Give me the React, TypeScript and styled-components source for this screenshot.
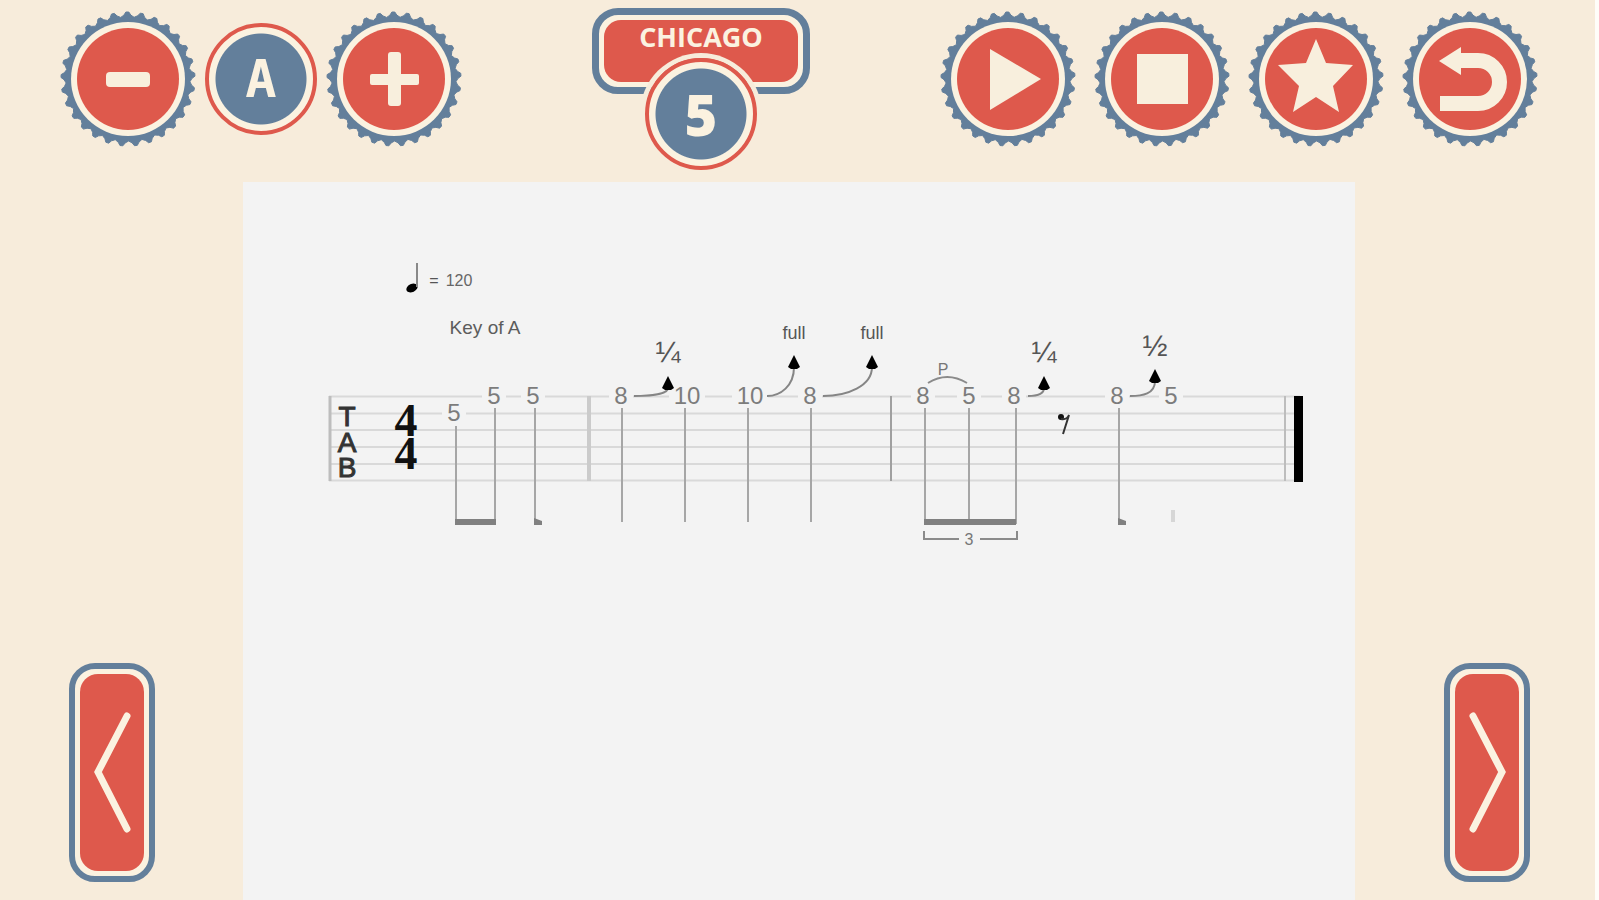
import React from "react";
import styled, { createGlobalStyle } from "styled-components";

const color = {
  page: "#f7ecdb",
  cream: "#fbf2e0",
  icon: "#f8efdd",
  red: "#de594c",
  blue: "#637f9b",
  paper: "#f3f3f3",
  staff: "#d9d9d9",
  stem: "#a6a6a6",
  beam: "#808080",
  fret: "#7c7c7c",
};

const GlobalStyle = createGlobalStyle`
  *, *::before, *::after { box-sizing: border-box; }
  body { margin: 0; background: #fffdf9; }
`;

const Page = styled.div`
  display: flex;
  flex-direction: column;
  min-height: 100vh;
  margin-right: 4px;
  background: ${color.page};
  font-family: "Open Sans", "Noto Sans", sans-serif;
`;

const Header = styled.header`
  display: flex;
  justify-content: space-between;
  align-items: flex-start;
  padding: 8px 57px 12px 60px;
`;

const Group = styled.div<{ $gap: number }>`
  display: flex;
  align-items: center;
  gap: ${(p) => p.$gap}px;
  margin-top: 3px;
`;

const RoundButton = styled.button`
  display: block;
  width: 136px;
  height: 136px;
  padding: 0;
  border: 0;
  border-radius: 50%;
  background: none;
  cursor: pointer;

  svg { display: block; }
`;

const Dial = styled.output<{ $narrow?: boolean }>`
  display: flex;
  align-items: center;
  justify-content: center;
  width: 112px;
  height: 112px;
  border: 4px solid ${color.red};
  border-radius: 50%;
  background: radial-gradient(circle, ${color.blue} 45px, ${color.cream} 46px);
  color: ${color.cream};
  font-family: ${(p) =>
    p.$narrow ? '"DejaVu Sans Mono", monospace' : '"Open Sans", sans-serif'};
  font-size: ${(p) => (p.$narrow ? 52 : 56)}px;
  font-weight: ${(p) => (p.$narrow ? 700 : 800)};
  line-height: 60px;
`;

const Badge = styled.div`
  position: relative;
  width: 218px;
  height: 162px;
`;

const Plate = styled.div`
  height: 86px;
  padding: 5px;
  border: 7px solid ${color.blue};
  border-radius: 26px;
  background: ${color.cream};
`;

const Title = styled.h1`
  height: 100%;
  margin: 0;
  border-radius: 17px;
  background: ${color.red};
  color: ${color.cream};
  font-size: 27px;
  font-weight: 700;
  line-height: 34px;
  text-align: center;
`;

const BadgeDial = styled.div`
  position: absolute;
  top: 50px;
  left: 53px;
  border-radius: 50%;
  box-shadow: 0 0 0 5px ${color.page};
`;

const Main = styled.main`
  display: flex;
  flex: 1;
`;

const Side = styled.nav<{ $width: number; $inset: number }>`
  display: flex;
  flex: none;
  align-items: flex-end;
  width: ${(p) => p.$width}px;
  padding: 0 0 18px ${(p) => p.$inset}px;
`;

const PageButton = styled.button`
  width: 86px;
  height: 219px;
  padding: 5px;
  border: 6px solid ${color.blue};
  border-radius: 26px;
  background: ${color.cream};
  cursor: pointer;
`;

const PageButtonFace = styled.span`
  display: flex;
  align-items: center;
  justify-content: center;
  height: 100%;
  border-radius: 18px;
  background: ${color.red};

  svg { display: block; }
`;

const Paper = styled.section`
  flex: 1;
  min-width: 0;
  background: ${color.paper};
`;

const Score = styled.svg`
  display: block;
  width: 100%;
  height: auto;
  font-family: "Liberation Sans", sans-serif;
  text-anchor: middle;
`;

const TEETH = 29;

const TOOTH = [
  [-0.5, 62],
  [-0.25, 64],
  [-0.1, 67],
  [0.1, 67],
  [0.25, 64],
];

function gearPath() {
  const points: string[] = [];
  for (let i = 0; i < TEETH; i++) {
    for (const [offset, radius] of TOOTH) {
      const a = ((i + offset) / TEETH) * Math.PI * 2 - Math.PI / 2 - 0.01;
      points.push(`${(Math.cos(a) * radius).toFixed(2)} ${(Math.sin(a) * radius).toFixed(2)}`);
    }
  }
  return `M${points.join("L")}Z`;
}

const GEAR = gearPath();

function GearButton({ label, children }: { label: string; children: React.ReactNode }) {
  return (
    <RoundButton type="button" aria-label={label}>
      <svg width="136" height="136" viewBox="-68 -68 136 136" aria-hidden="true">
        <path d={GEAR} fill={color.blue} stroke={color.blue} strokeLinejoin="round" />
        <circle r="57" fill={color.cream} />
        <circle r="51" fill={color.red} />
        <g fill={color.icon}>{children}</g>
      </svg>
    </RoundButton>
  );
}

function Chevron({ d }: { d: string }) {
  return (
    <svg width="63" height="197" viewBox="0 0 63 197" aria-hidden="true">
      <path d={d} fill="none" stroke={color.cream} strokeWidth="7" strokeLinecap="round" strokeLinejoin="miter" />
    </svg>
  );
}

const STRINGS = [396.5, 413.5, 430, 447, 464, 480.5];

const FRETS = [
  { x: 454, y: 413, n: "5" },
  { x: 494, y: 396, n: "5" },
  { x: 533, y: 396, n: "5" },
  { x: 621, y: 396, n: "8" },
  { x: 687, y: 396, n: "10" },
  { x: 750, y: 396, n: "10" },
  { x: 810, y: 396, n: "8" },
  { x: 923, y: 396, n: "8" },
  { x: 969, y: 396, n: "5" },
  { x: 1014, y: 396, n: "8" },
  { x: 1117, y: 396, n: "8" },
  { x: 1171, y: 396, n: "5" },
];

const STEMS = [
  [456, 426, 524],
  [495, 408, 524],
  [535, 408, 524],
  [622, 408, 522],
  [685, 408, 522],
  [748, 408, 522],
  [811, 408, 522],
  [925, 408, 524],
  [969, 408, 524],
  [1016, 408, 524],
  [1119, 408, 524],
];

const BENDS = [
  { from: 634, x: 668, tip: 376, amount: "¼", size: 30, labelY: 362 },
  { from: 767, x: 794, tip: 355, amount: "full", size: 18, labelY: 339 },
  { from: 823, x: 872, tip: 355, amount: "full", size: 18, labelY: 339 },
  { from: 1028, x: 1044, tip: 376, amount: "¼", size: 30, labelY: 362 },
  { from: 1130, x: 1155, tip: 369, amount: "½", size: 30, labelY: 356 },
];

function Tablature() {
  return (
    <Score viewBox="243 182 1112 400" role="img" aria-label="Guitar tablature, key of A">
      <ellipse cx="412" cy="288" rx="6" ry="4" transform="rotate(-25 412 288)" fill="#000" />
      <path d="M417 263V287" stroke="#888" strokeWidth="2" />
      <text x="434" y="286" fontSize="16" fill="#555">=</text>
      <text x="459" y="286" fontSize="16" fill="#666">120</text>
      <text x="485" y="334" fontSize="19" fill="#5c5c5c">Key of A</text>

      <g stroke={color.staff} strokeWidth="2">
        {STRINGS.map((y) => (
          <path key={y} d={`M329 ${y}H1300`} />
        ))}
      </g>
      <path d="M330 396V481" stroke="#bdbdbd" strokeWidth="3" />
      <path d="M589 396V481" stroke="#cbcbcb" strokeWidth="4" />
      <path d="M891 396V481" stroke="#a0a0a0" strokeWidth="2" />
      <path d="M1285 396V481" stroke="#bdbdbd" strokeWidth="2" />
      <path d="M1294 396H1303V482H1294Z" fill="#000" />

      <g fontSize="28" fill="#333" stroke="#333" strokeWidth="1">
        <text x="347" y="426">T</text>
        <text x="347" y="452">A</text>
        <text x="347" y="477">B</text>
      </g>
      <g fontFamily="'Liberation Serif', serif" fontSize="46" fontWeight="700" fill="#111">
        <text x="406" y="436">4</text>
        <text x="406" y="469">4</text>
      </g>

      {STEMS.map(([x, top, bottom]) => (
        <path key={x} d={`M${x} ${top}V${bottom}`} stroke={color.stem} strokeWidth="2" />
      ))}
      <path d="M1173 510V522" stroke="#d6d6d6" strokeWidth="4" />
      <g fill={color.beam}>
        <path d="M455 519H496V525H455Z" />
        <path d="M534 518L542 521V525H534Z" />
        <path d="M924 519H1016V525H924Z" />
        <path d="M1118 518L1126 521V525H1118Z" />
      </g>

      {FRETS.map(({ x, y, n }) => {
        const half = n.length > 1 ? 18 : 12;
        return (
          <g key={x}>
            <rect x={x - half} y={y - 4} width={half * 2} height="8" fill={color.paper} />
            <text x={x} y={y + 8} fontSize="24" fill={color.fret}>{n}</text>
          </g>
        );
      })}

      {BENDS.map(({ from, x, tip, amount, size, labelY }) => (
        <g key={x}>
          <path
            d={`M${from} 396C${(from + x) / 2} 396 ${x} ${tip + 30 > 396 ? 394 : 386} ${x} ${tip + 12}`}
            fill="none"
            stroke="#858585"
            strokeWidth="2"
          />
          <path d={`M${x} ${tip}L${x + 6} ${tip + 12}L${x + 3} ${tip + 14}H${x - 3}L${x - 6} ${tip + 12}Z`} fill="#000" />
          <text x={x} y={labelY} fontSize={size} fill="#555">{amount}</text>
        </g>
      ))}

      <path d="M928 383Q947 371 967 383" fill="none" stroke="#8a8a8a" strokeWidth="2" />
      <text x="943" y="375" fontSize="16" fill="#777">P</text>

      <circle cx="1061" cy="417" r="3" fill="#111" />
      <path d="M1061 419Q1067 420 1069 415L1063 434" fill="none" stroke="#333" strokeWidth="2" />

      <path d="M924 531V539H959M980 539H1017V531" fill="none" stroke="#8a8a8a" strokeWidth="2" />
      <text x="969" y="545" fontSize="16" fill="#777">3</text>
    </Score>
  );
}

export default function App() {
  return (
    <>
      <GlobalStyle />
      <Page>
        <Header>
          <Group $gap={9}>
            <GearButton label="Lower key">
              <rect x="-22" y="-7" width="44" height="15" rx="4" />
            </GearButton>
            <Dial $narrow aria-label="Key">A</Dial>
            <GearButton label="Raise key">
              <rect x="-24" y="-5" width="49" height="11" rx="2" />
              <rect x="-6" y="-27" width="13" height="54" rx="3" />
            </GearButton>
          </Group>

          <Badge>
            <Plate>
              <Title>CHICAGO</Title>
            </Plate>
            <BadgeDial>
              <Dial aria-label="Lick number">5</Dial>
            </BadgeDial>
          </Badge>

          <Group $gap={18}>
            <GearButton label="Play">
              <path d="M-18 -30L33 0L-18 31Z" />
            </GearButton>
            <GearButton label="Stop">
              <rect x="-25" y="-25" width="51" height="50" />
            </GearButton>
            <GearButton label="Favorite">
              <path d="M0 -40L10 -16L37 -14L17 7L23 33L0 18L-23 33L-17 7L-38 -14L-10 -16Z" />
            </GearButton>
            <GearButton label="Back">
              <path d="M-31 -18L-9 -32V-4Z" />
              <path
                d="M-12 -18.5H8A21.5 21.5 0 0 1 8 24.5H-30"
                fill="none"
                stroke={color.icon}
                strokeWidth="15"
              />
            </GearButton>
          </Group>
        </Header>

        <Main>
          <Side $width={243} $inset={69} aria-label="Previous">
            <PageButton type="button" aria-label="Previous lick">
              <PageButtonFace>
                <Chevron d="M46 42L17 98L46 155" />
              </PageButtonFace>
            </PageButton>
          </Side>
          <Paper>
            <Tablature />
          </Paper>
          <Side $width={240} $inset={89} aria-label="Next">
            <PageButton type="button" aria-label="Next lick">
              <PageButtonFace>
                <Chevron d="M17 42L46 98L17 155" />
              </PageButtonFace>
            </PageButton>
          </Side>
        </Main>
      </Page>
    </>
  );
}
